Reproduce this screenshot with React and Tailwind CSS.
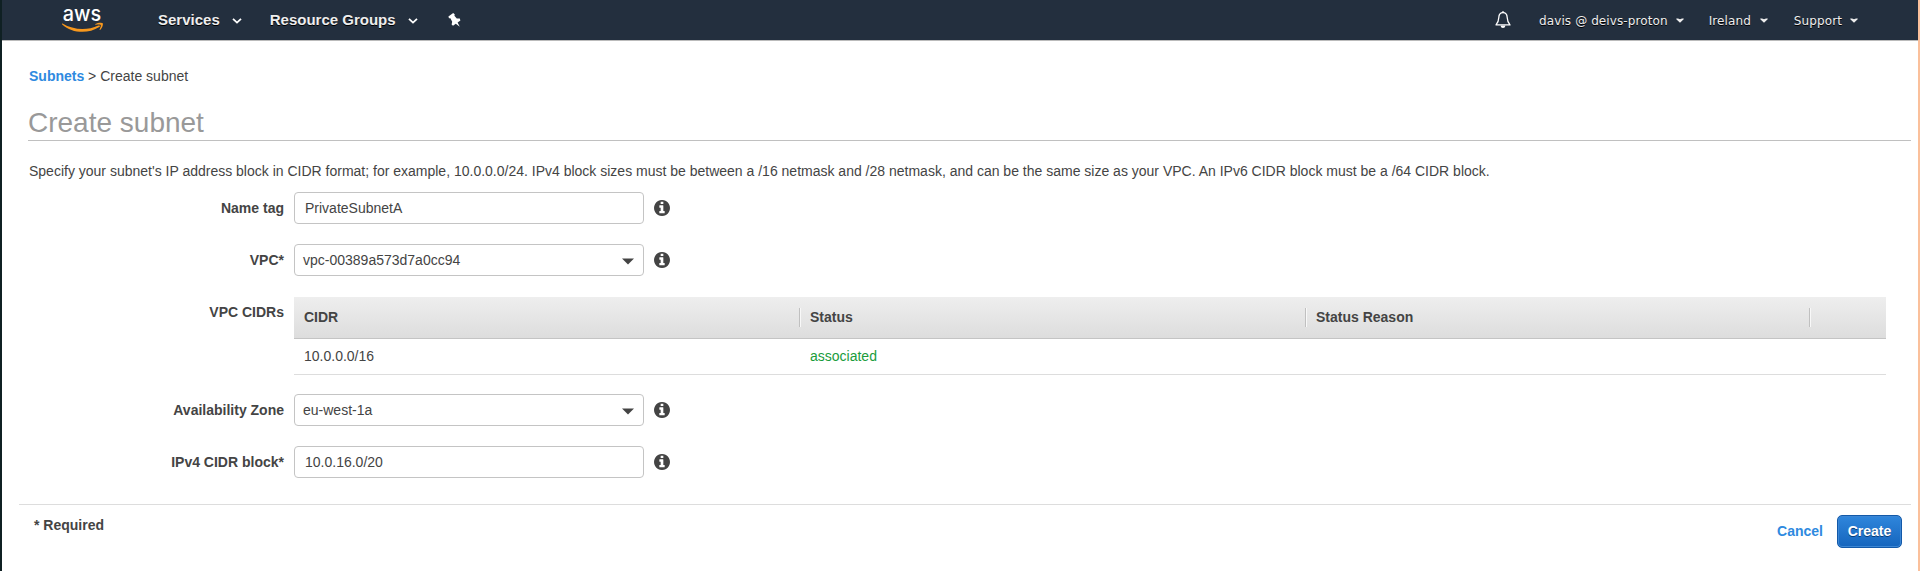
import React from "react";

function Chevron({ className }) {
  return (
    <svg className={className} width="10" height="6" viewBox="0 0 10 6" fill="none">
      <path d="M1 0.8 L5 4.6 L9 0.8" stroke="#fff" strokeWidth="1.8" />
    </svg>
  );
}

function SmallCaret({ className }) {
  return (
    <svg className={className} width="8" height="5" viewBox="0 0 8 5">
      <path d="M0.3 0.4 H2 L4 1.2 L6 0.4 H7.7 V1.2 L4 4.8 L0.3 1.2 Z" fill="#eee" />
    </svg>
  );
}

function InfoIcon() {
  return (
    <svg className="ml-[10px] mt-2" width="16" height="16" viewBox="128 128 1536 1536" fill="#444">
      <path d="M1152 1376v-160q0-14-9-23t-23-9h-96v-512q0-14-9-23t-23-9h-320q-14 0-23 9t-9 23v160q0 14 9 23t23 9h96v320h-96q-14 0-23 9t-9 23v160q0 14 9 23t23 9h448q14 0 23-9t9-23zM1024 480v-160q0-14-9-23t-23-9h-192q-14 0-23 9t-9 23v160q0 14 9 23t23 9h192q14 0 23-9t9-23zM1664 896q0 209-103 385.5t-279.5 279.5-385.5 103-385.5-103-279.5-279.5-103-385.5 103-385.5 279.5-279.5 385.5-103 385.5 103 279.5 279.5 103 385.5z" />
    </svg>
  );
}

function Logo() {
  return (
    <svg className="ml-[60px] block" width="42" height="40" viewBox="0 0 42 40">
      <text
        x="0.8"
        y="20.6"
        textLength="38.4"
        lengthAdjust="spacingAndGlyphs"
        fill="#fff"
        fontSize="21"
        fontWeight="500"
        fontFamily="Inter, sans-serif"
      >
        aws
      </text>
      <path
        d="M0.5 23.6 C11 30 25 31 36.4 25.6 C38 24.9 38.6 26 37.3 27 C26 34.2 10 33.4 0.2 24.4 C-0.2 23.8 0.1 23.4 0.5 23.6 Z"
        fill="#f7981d"
      />
      <path
        d="M33.4 24.1 C36 22.4 40 22.5 40.7 23.3 C41.4 24.3 40.4 28 38.2 29.9 C37.7 30.2 37.4 30 37.6 29.5 C38.4 27.7 39.2 25.6 38.7 25 C38.2 24.4 35.6 24.6 33.8 24.8 C33.2 24.8 33 24.4 33.4 24.1 Z"
        fill="#f7981d"
      />
    </svg>
  );
}

function Pin() {
  return (
    <svg className="ml-[30px]" width="13" height="14" viewBox="0 0 13 14" fill="#fff">
      <path d="M0.4 3.6 L5.2 0.1 L6.8 1.6 L6.4 2.8 L8.8 5.6 L11.8 5.6 L12.4 7.4 L9.6 9.4 L11.8 13.8 L7.8 10.7 L5 12.8 L3.6 11.6 L4.2 8.8 L2.4 5.2 L1 5.2 Z" />
    </svg>
  );
}

function Bell() {
  return (
    <svg width="16" height="18" viewBox="0 0 16 18" fill="none">
      <path
        d="M8 1.6 C5 1.6 3.9 4 3.8 6.5 C3.7 9.8 3.2 11.6 1 13.9 H15 C12.8 11.6 12.3 9.8 12.2 6.5 C12.1 4 11 1.6 8 1.6 Z"
        stroke="#fff"
        strokeWidth="1.3"
        strokeLinejoin="round"
      />
      <path d="M7.2 0.3 H8.8 V2 H7.2 Z M5.6 14.5 H10.4 C10.2 16.2 9.3 17 8 17 C6.7 17 5.8 16.2 5.6 14.5 Z" fill="#fff" />
    </svg>
  );
}

function Label({ children, className = "leading-8" }) {
  return <div className={"w-[282px] text-right font-bold " + className}>{children}</div>;
}

function Row({ label, value, select }) {
  return (
    <div className="flex h-8">
      <Label>{label}</Label>
      <div
        className={
          "ml-[10px] flex w-[350px] items-center justify-between rounded-[4px] border border-[#c4c4c4] bg-white " +
          (select ? "pl-2 pr-[9px]" : "pl-[10px]")
        }
      >
        <span>{value}</span>
        {select && (
          <svg className="mt-[2px]" width="12" height="7" viewBox="0 0 12 7">
            <path d="M0 0.5 H12 L6 6.5 Z" fill="#444" />
          </svg>
        )}
      </div>
      <InfoIcon />
    </div>
  );
}

function HeadCell({ children, className }) {
  return (
    <div className={"flex h-full items-center font-bold " + className}>
      <div className="mr-[9px] h-[19px] w-[2px] border-l border-[#c0c0c0] bg-[#f8f8f8]" />
      <span className="-mt-px">{children}</span>
    </div>
  );
}

export default function App() {
  return (
    <div className="h-[571px] w-[1920px] border-l-2 border-r-2 border-l-[#0f2023] border-r-[#fbc09b] bg-white font-['Liberation_Sans',Arial,sans-serif] text-[14px] leading-5 text-[#444]">
      <header className="flex h-[41px] items-center border-b border-[#bbb] bg-[#232f3e] text-[#eee]">
        <Logo />
        <div className="ml-[54px] flex flex-1 items-center text-[15px] font-bold [text-shadow:0_1px_0_#000]">
          <span>Services</span>
          <Chevron className="ml-3 mt-[2px]" />
          <span className="ml-7">Resource Groups</span>
          <Chevron className="ml-3 mt-[2px]" />
          <Pin />
        </div>
        <div className="flex items-center pr-[60px] font-['DejaVu_Sans',sans-serif] text-[12px] [text-shadow:0_1px_0_#000]">
          <Bell />
          <span className="ml-[28px] mt-px tracking-[0.1px]">davis @ deivs-proton</span>
          <SmallCaret className="ml-[8px] mt-px" />
          <span className="ml-[25px] mt-px tracking-[0.1px]">Ireland</span>
          <SmallCaret className="ml-[9px] mt-px" />
          <span className="ml-[26px] mt-px tracking-[0.1px]">Support</span>
          <SmallCaret className="ml-[8px] mt-px" />
        </div>
      </header>

      <div className="pl-[26px] pr-[7px]">
        <div className="pl-px pt-[25px]">
          <span className="font-bold text-[#2e8ae0]">Subnets</span> &gt; Create subnet
        </div>
        <h1 className="mt-[19px] h-[36px] border-b border-[#c0c0c0] text-[28px] leading-[36px] text-[#999]">Create subnet</h1>
        <p className="mt-5 pl-px">
          Specify your subnet's IP address block in CIDR format; for example, 10.0.0.0/24. IPv4 block sizes must be between a /16
          netmask and /28 netmask, and can be the same size as your VPC. An IPv6 CIDR block must be a /64 CIDR block.
        </p>
      </div>

      <main className="mt-[11px] flex flex-col gap-5">
        <Row label="Name tag" value="PrivateSubnetA" />
        <Row label="VPC*" value="vpc-00389a573d7a0cc94" select />
        <div className="mt-px flex h-[77px]">
          <Label className="leading-[30px]">VPC CIDRs</Label>
          <div className="ml-[10px] w-[1592px]">
            <div className="flex h-[42px] items-center border-b border-[#c4c4c4] bg-linear-to-b from-[#eee] to-[#ddd]">
              <div className="-mt-px w-[505px] pl-[10px] font-bold">CIDR</div>
              <HeadCell className="w-[506px]">Status</HeadCell>
              <HeadCell className="w-[504px]">Status Reason</HeadCell>
              <HeadCell className="" />
            </div>
            <div className="flex h-[36px] items-center border-b border-[#ddd] pb-px">
              <div className="w-[506px] pl-[10px]">10.0.0.0/16</div>
              <div className="pl-[10px] text-[#1a9c3c]">associated</div>
            </div>
          </div>
        </div>
        <Row label="Availability Zone" value="eu-west-1a" select />
        <Row label="IPv4 CIDR block*" value="10.0.16.0/20" />
      </main>

      <footer className="ml-[17px] mr-[7px] mt-[26px] flex items-start border-t border-[#ddd] pl-[15px] pr-[9px] font-bold">
        <div className="mt-[10px] flex-1">* Required</div>
        <div className="mt-4 text-[#2e8ae0]">Cancel</div>
        <div className="ml-[14px] mt-[10px] flex h-[33px] w-[65px] items-center justify-center rounded-[5px] border border-[#1359a8] bg-linear-to-b from-[#2f86dc] to-[#1565bd] pb-px text-white shadow-[inset_0_0_0_1px_#3c86d4] [text-shadow:0_1px_0_#0a3d78]">
          Create
        </div>
      </footer>
    </div>
  );
}
